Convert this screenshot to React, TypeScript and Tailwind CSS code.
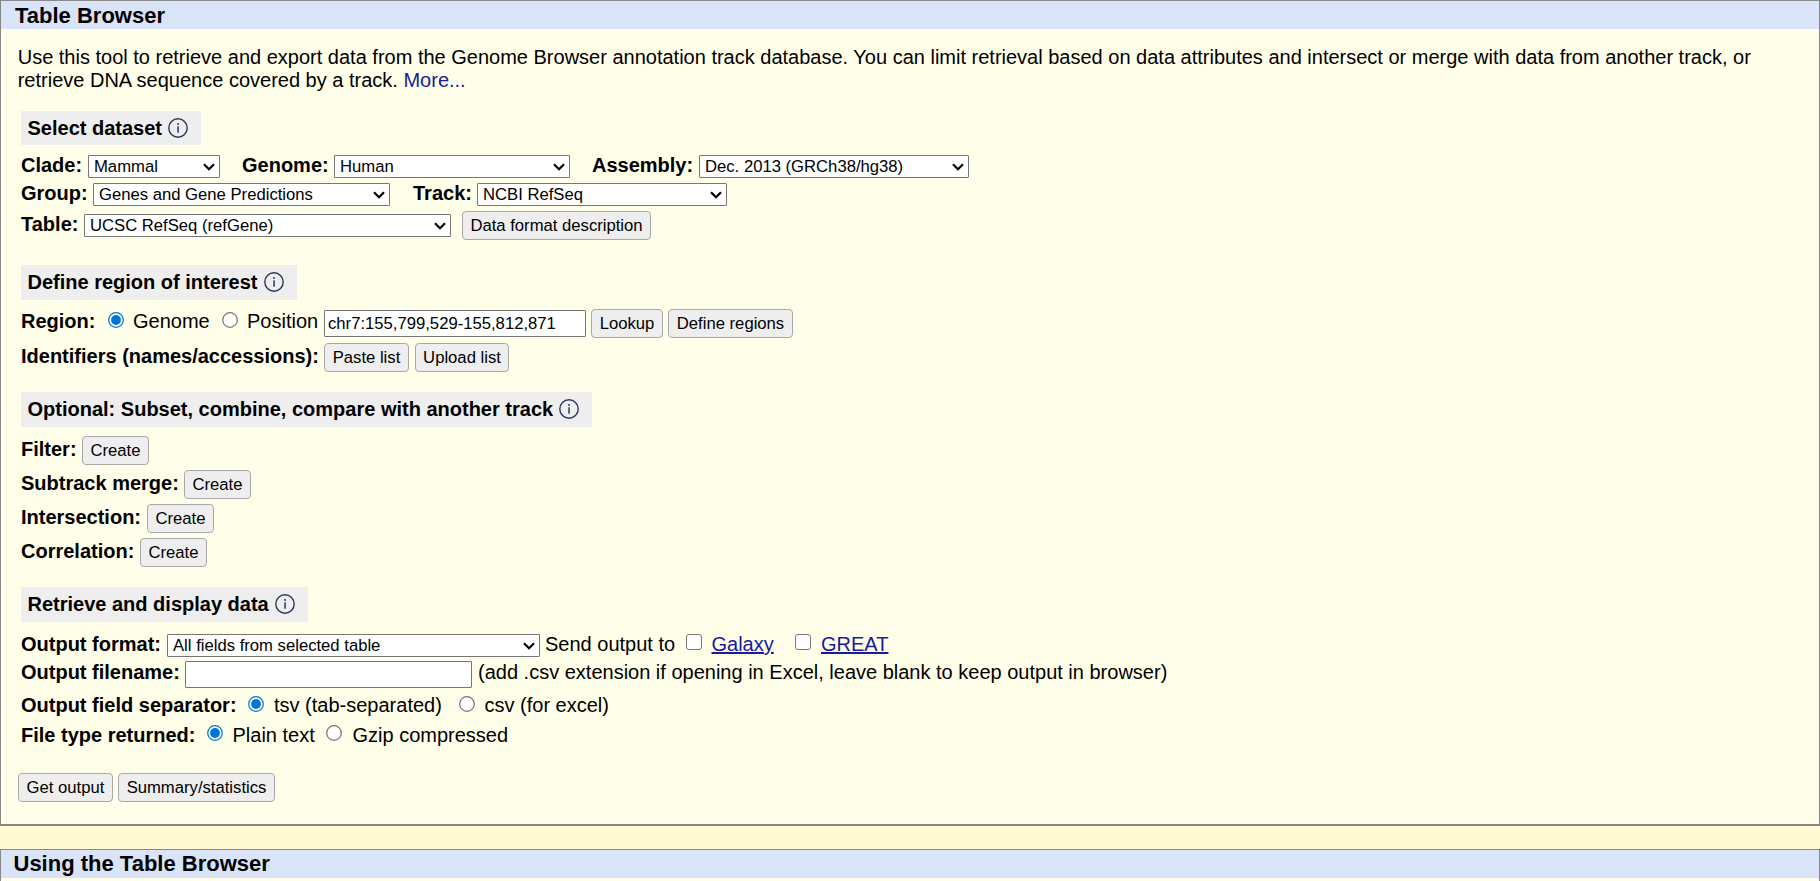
import type { ReactNode } from "react";

type Kids = { children?: ReactNode; className?: string };

function Label({ children, className = "" }: Kids) {
  return (
    <div className={`shrink-0 whitespace-nowrap text-[20px] leading-[23px] font-bold ${className}`}>{children}</div>
  );
}

function Text({ children, className = "" }: Kids) {
  return <div className={`shrink-0 whitespace-nowrap text-[20px] leading-[23px] ${className}`}>{children}</div>;
}

function Select({ children, className = "" }: Kids) {
  return (
    <div
      className={`flex h-[23px] shrink-0 items-center justify-between rounded-[1px] border border-[#767676] bg-white pr-[4px] pl-[5px] text-[16.667px] leading-[21px] whitespace-nowrap ${className}`}
    >
      <span>{children}</span>
      <svg width="12" height="8" viewBox="0 0 12 8" fill="none" stroke="#000" strokeWidth="2.2">
        <path d="M1 1.3 L6 6.3 L11 1.3" />
      </svg>
    </div>
  );
}

function Button({ children, className = "" }: Kids) {
  return (
    <button
      type="button"
      className={`h-[29px] shrink-0 rounded-[4px] border border-[#a9a9a9] bg-[#eeeeee] text-center text-[16.667px] leading-[27px] whitespace-nowrap ${className}`}
    >
      {children}
    </button>
  );
}

function Radio({ checked = false, className = "" }: { checked?: boolean; className?: string }) {
  return (
    <svg className={`shrink-0 ${className}`} width="16" height="16" viewBox="0 0 16 16">
      <circle cx="8" cy="8" r="7.3" fill="#fff" stroke={checked ? "#0075d8" : "#767676"} strokeWidth="1.25" />
      {checked && <circle cx="8" cy="8" r="4.9" fill="#0075d8" />}
    </svg>
  );
}

function Checkbox({ className = "" }: { className?: string }) {
  return <div className={`size-4 shrink-0 rounded-[3px] border border-[#767676] bg-white ${className}`} />;
}

function Section({ children, className = "" }: Kids) {
  return (
    <div className={`ml-[20px] flex bg-[#eeeeee] pl-[6.5px] ${className}`}>
      <Label className="mt-[6px]">{children}</Label>
      <svg className="mt-[7px] ml-[6px] shrink-0" width="20" height="20" viewBox="0 0 20 20">
        <circle cx="10" cy="10" r="9.2" fill="none" stroke="#2c3563" strokeWidth="1.4" />
        <rect x="9.3" y="8.3" width="1.5" height="6.4" fill="#2c3563" />
        <rect x="9.2" y="5.1" width="1.7" height="1.7" fill="#2c3563" />
      </svg>
    </div>
  );
}

function Row({ children, className = "" }: Kids) {
  return <div className={`flex items-start pl-[20px] ${className}`}>{children}</div>;
}

export default function App() {
  return (
    <div className="flex h-[881px] flex-col overflow-hidden bg-[#fff8d2] font-['Liberation_Sans',Arial,sans-serif] text-black">
      <section className="h-[826px] shrink-0 border border-b-2 border-[#888888] bg-[#fffee8]">
        <h1 className="h-[28px] bg-[#d9e4f8] pl-[14px] text-[22px] leading-[29px] font-bold">Table Browser</h1>

        <p className="mt-[17px] h-[65px] pl-[16.7px] text-[20px] leading-[23px] whitespace-nowrap">
          Use this tool to retrieve and export data from the Genome Browser annotation track database. You can limit
          retrieval based on data attributes and intersect or merge with data from another track, or
          <br />
          retrieve DNA sequence covered by a track. <a className="text-[#1a1a9c]">More...</a>
        </p>

        <Section className="h-[34px] w-[180px]">Select dataset</Section>
        <Row className="mt-[9px] h-[28px]">
          <Label className="w-[67px]">Clade:</Label>
          <Select className="mt-px w-[132px]">Mammal</Select>
          <Label className="ml-[22px] w-[92px]">Genome:</Label>
          <Select className="mt-px w-[236px]">Human</Select>
          <Label className="ml-[22px] w-[107px]">Assembly:</Label>
          <Select className="mt-px w-[270px]">Dec. 2013 (GRCh38/hg38)</Select>
        </Row>
        <Row className="h-[29px]">
          <Label className="w-[72px]">Group:</Label>
          <Select className="mt-px w-[297px]">Genes and Gene Predictions</Select>
          <Label className="ml-[23px] w-[64px]">Track:</Label>
          <Select className="mt-px w-[250px]">NCBI RefSeq</Select>
        </Row>
        <Row className="h-[54px]">
          <Label className="mt-[2px] w-[63px]">Table:</Label>
          <Select className="mt-[3px] w-[367px]">UCSC RefSeq (refGene)</Select>
          <Button className="ml-[11px] w-[189px]">Data format description</Button>
        </Row>

        <Section className="h-[35px] w-[276px]">Define region of interest</Section>
        <Row className="mt-[9px] h-[34px]">
          <Label className="mt-px w-[86.5px]">Region:</Label>
          <Radio checked className="mt-[3px]" />
          <Text className="mt-px ml-[9.5px] w-[88.5px]">Genome</Text>
          <Radio className="mt-[3px]" />
          <Text className="mt-px ml-[9.5px] w-[77px]">Position</Text>
          <div className="mt-px h-[27px] w-[262px] shrink-0 rounded-[1px] border border-[#767676] bg-white pl-[3px] text-[16.667px] leading-[25px]">
            chr7:155,799,529-155,812,871
          </div>
          <Button className="ml-[5px] w-[72px]">Lookup</Button>
          <Button className="ml-[5px] w-[125px]">Define regions</Button>
        </Row>
        <Row className="h-[49px]">
          <Label className="mt-[2px] w-[303px]">Identifiers (names/accessions):</Label>
          <Button className="w-[85px]">Paste list</Button>
          <Button className="ml-[6px] w-[94px]">Upload list</Button>
        </Row>

        <Section className="h-[35px] w-[571px]">Optional: Subset, combine, compare with another track</Section>
        <Row className="mt-[9px] h-[34px]">
          <Label className="mt-[2px] w-[61px]">Filter:</Label>
          <Button className="w-[67px]">Create</Button>
        </Row>
        <Row className="h-[34px]">
          <Label className="mt-[2px] w-[163px]">Subtrack merge:</Label>
          <Button className="w-[67px]">Create</Button>
        </Row>
        <Row className="h-[34px]">
          <Label className="mt-[2px] w-[126px]">Intersection:</Label>
          <Button className="w-[67px]">Create</Button>
        </Row>
        <Row className="h-[34px]">
          <Label className="mt-[2px] w-[119px]">Correlation:</Label>
          <Button className="w-[67px]">Create</Button>
        </Row>

        <Section className="mt-[15px] h-[35px] w-[287px]">Retrieve and display data</Section>
        <Row className="mt-[11px] h-[28px]">
          <Label className="w-[146px]">Output format:</Label>
          <Select className="mt-px w-[373px]">All fields from selected table</Select>
          <Text className="ml-[5px] w-[141px]">Send output to</Text>
          <Checkbox className="mt-px" />
          <Text className="ml-[9.5px] w-[83.5px]">
            <a className="text-[#1a1a9c] underline">Galaxy</a>
          </Text>
          <Checkbox className="mt-px" />
          <Text className="ml-[10px]">
            <a className="text-[#1a1a9c] underline">GREAT</a>
          </Text>
        </Row>
        <Row className="h-[33px]">
          <Label className="w-[164px]">Output filename:</Label>
          <div className="h-[27px] w-[287px] shrink-0 rounded-[1px] border border-[#767676] bg-white" />
          <Text className="ml-[6px]">(add .csv extension if opening in Excel, leave blank to keep output in browser)</Text>
        </Row>
        <Row className="h-[30px]">
          <Label className="w-[227px]">Output field separator:</Label>
          <Radio checked className="mt-[2px]" />
          <Text className="ml-[10px] w-[184.5px]">tsv (tab-separated)</Text>
          <Radio className="mt-[2px]" />
          <Text className="ml-[10px]">csv (for excel)</Text>
        </Row>
        <Row className="h-[49px]">
          <Label className="w-[186px]">File type returned:</Label>
          <Radio checked className="mt-px" />
          <Text className="ml-[9.5px] w-[93.5px]">Plain text</Text>
          <Radio className="mt-px" />
          <Text className="ml-[10.5px]">Gzip compressed</Text>
        </Row>

        <div className="flex pl-[17px]">
          <Button className="w-[95px]">Get output</Button>
          <Button className="ml-[5px] w-[157px]">Summary/statistics</Button>
        </div>
      </section>

      <section className="mt-[23px] h-[60px] shrink-0 border border-[#888888] bg-[#fffee8]">
        <h2 className="h-[28px] bg-[#d9e4f8] pl-[12.5px] text-[22px] leading-[28px] font-bold">
          Using the Table Browser
        </h2>
      </section>
    </div>
  );
}
